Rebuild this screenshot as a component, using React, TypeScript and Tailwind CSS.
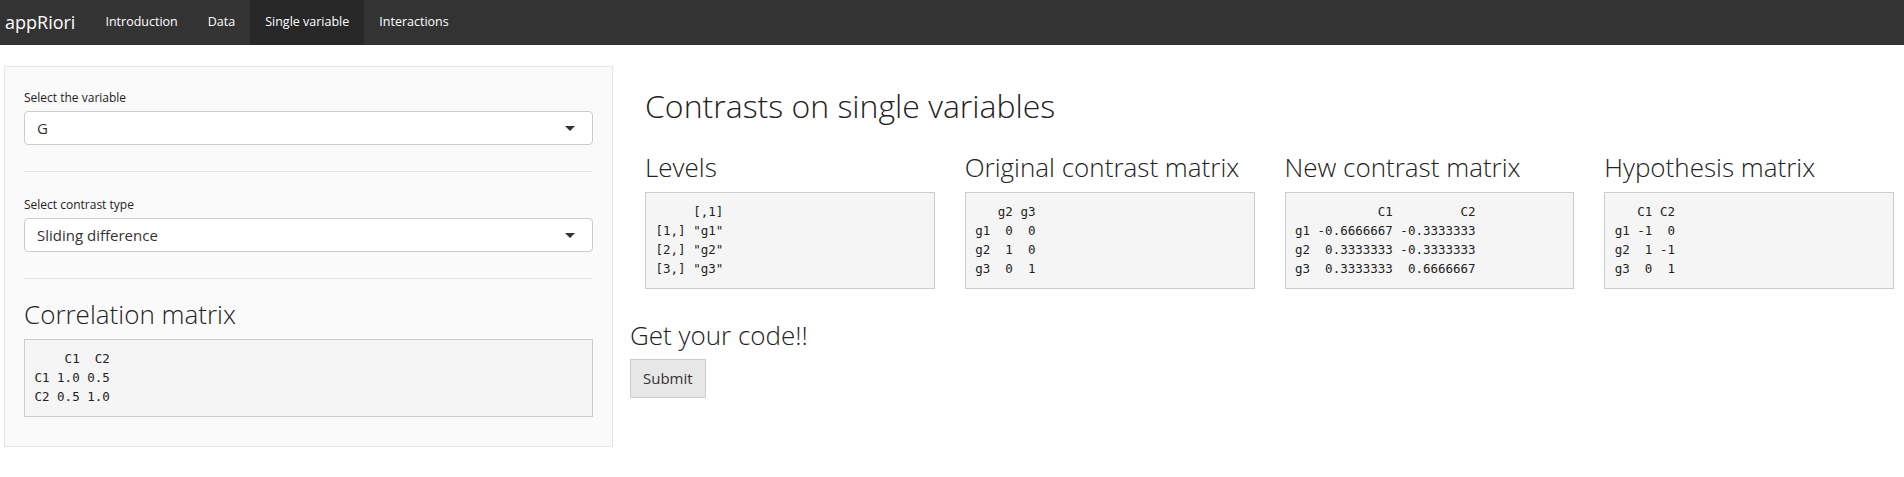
const sans = { fontFamily: '"Open Sans", "Liberation Sans", sans-serif' };

const tabs = ["Introduction", "Data", "Single variable", "Interactions"];

const blocks = [
  {
    title: "Levels",
    out: `     [,1]
[1,] "g1"
[2,] "g2"
[3,] "g3"`,
  },
  {
    title: "Original contrast matrix",
    out: `   g2 g3
g1  0  0
g2  1  0
g3  0  1`,
  },
  {
    title: "New contrast matrix",
    out: `           C1         C2
g1 -0.6666667 -0.3333333
g2  0.3333333 -0.3333333
g3  0.3333333  0.6666667`,
  },
  {
    title: "Hypothesis matrix",
    out: `   C1 C2
g1 -1  0
g2  1 -1
g3  0  1`,
  },
];

const Output = ({ text }: { text: string }) => (
  <pre className="m-0 mb-[10px] whitespace-pre border border-[#ccc] bg-[#f5f5f5] p-[9.5px] font-['DejaVu_Sans_Mono',monospace] text-[12.5px] leading-[19px] text-[#222]">
    {text}
  </pre>
);

const SelectBox = ({ label, value }: { label: string; value: string }) => (
  <div>
    <label className="mb-[5px] block text-[12px] leading-[17px] text-[#222]">{label}</label>
    <div className="flex h-[34px] items-center justify-between rounded-[4px] border border-[#ccc] bg-white pl-[12px] pr-[17px] text-[15px] text-[#333]">
      <span>{value}</span>
      <span className="h-0 w-0 border-x-[5px] border-t-[5px] border-x-transparent border-t-[#333]" />
    </div>
  </div>
);

export default function App() {
  return (
    <div className="min-h-screen bg-white text-[#222]" style={sans}>
      <nav className="flex h-[45px] bg-[#333]">
        <div className="flex items-center pl-[5px] pr-[15px] text-[18px] text-white">appRiori</div>
        <ul className="flex text-[12.5px]">
          {tabs.map((t) => (
            <li
              key={t}
              className={
                t === "Single variable"
                  ? "flex items-center bg-[#272727] px-[15px] text-white"
                  : "flex items-center px-[15px] text-white"
              }
            >
              {t}
            </li>
          ))}
        </ul>
      </nav>

      <div className="flex items-start pt-[21px]">
        <aside className="ml-[4px] w-[609px] shrink-0 border border-[#e6e6e6] bg-[#fafafa] px-[19px] pt-[22px] pb-[19px]">
          <SelectBox label="Select the variable" value="G" />
          <hr className="mt-[26px] border-[#e5e5e5]" />
          <div className="mt-[24px]">
            <SelectBox label="Select contrast type" value="Sliding difference" />
          </div>
          <hr className="mt-[26px] border-[#e5e5e5]" />
          <h3 className="mt-[21px] mb-[10px] text-[26px] font-light leading-[1.1]">Correlation matrix</h3>
          <Output
            text={`    C1  C2
C1 1.0 0.5
C2 0.5 1.0`}
          />
        </aside>

        <main className="ml-[17px] flex-1">
          <div className="pl-[15px]">
            <h2 className="mt-[22px] mb-[10px] text-[32px] font-light leading-[1.1]">Contrasts on single variables</h2>
            <div className="grid grid-cols-[repeat(4,289.75px)] gap-x-[30px]">
              {blocks.map((b) => (
                <div key={b.title}>
                  <h3 className="mt-[20px] mb-[10px] whitespace-nowrap text-[26px] font-light leading-[1.1]">{b.title}</h3>
                  <Output text={b.out} />
                </div>
              ))}
            </div>
          </div>
          <h3 className="mt-[22px] mb-[10px] text-[26px] font-light leading-[1.1]">Get your code!!</h3>
          <button className="border border-[#ccc] bg-[#e7e7e7] px-[12px] py-[8px] text-[15px] leading-[21px] text-[#333]">
            Submit
          </button>
        </main>
      </div>
    </div>
  );
}
